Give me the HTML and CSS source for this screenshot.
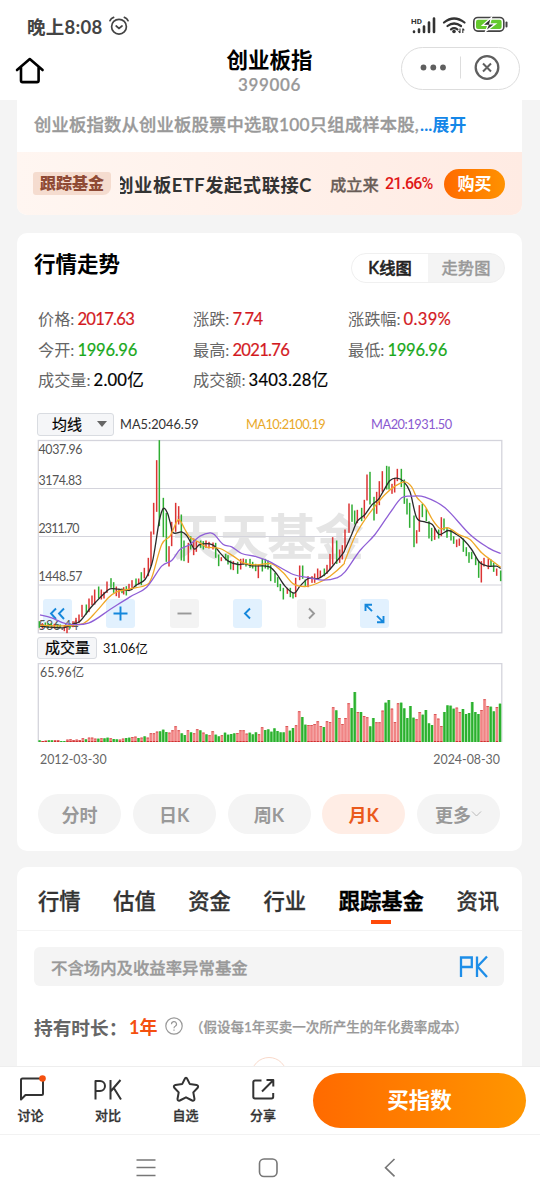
FILE: index.html
```
<!DOCTYPE html>
<html lang="zh-CN">
<head>
<meta charset="utf-8">
<title>创业板指</title>
<link rel="stylesheet" href="styles.css">
</head>
<body>
<div class="phone">
  <header class="header">
    <div class="status">
      <span class="clock">晚上8:08</span>
      <svg class="alarm" width="20" height="20" viewBox="0 0 20 20" fill="none" stroke="#444" stroke-width="1.7" stroke-linecap="round"><circle cx="10" cy="10.7" r="7.4"/><path d="M7.2 10l2.8 2.4 3-2.4M1 4.6Q2 2.2 4.6 1.4M19 4.6Q18 2.2 15.4 1.4"/></svg>
      <svg class="signals" width="98" height="20" viewBox="0 0 98 20">
        <text x="0" y="7.500" class="hd">HD</text>
        <path d="M3 15.500v.5M8 13.500v2.500M13 10.500v5.500M18 6.500v9.500M23 2.500v13.500" stroke="#333" stroke-width="2.600" stroke-linecap="round"/>
        <path d="M33 6.500q10-8 20.500 0M36.500 10q6.500-5 13.500 0M40 13.300q3-2.200 6.400 0" fill="none" stroke="#333" stroke-width="2.200" stroke-linecap="round"/><circle cx="43" cy="15.500" r="1.800" fill="#333"/><path d="M49 12.500v4.500M47.500 15.200l1.500 1.800M51.800 17v-4.500M53.300 14.300l-1.500-1.800" stroke="#333" stroke-width="1.100"/>
        <rect x="62.800" y="1.500" width="30" height="13.600" rx="4" fill="#fff" stroke="#444" stroke-width="1.600"/><rect x="65" y="3.700" width="25.600" height="9.200" rx="2" fill="#64c92d"/><path d="M95.500 6.500v4" stroke="#444" stroke-width="2" stroke-linecap="round"/><path d="M80.500 1.500L71.500 9.300h5.500L74.500 15.500l10-7.700h-5.700z" fill="#333" stroke="#fff" stroke-width="1.300"/>
      </svg>
    </div>
    <div class="titlebar">
      <svg class="home" width="30" height="28" viewBox="0 0 30 28" fill="none" stroke="#000" stroke-width="2.600" stroke-linecap="round" stroke-linejoin="round"><path d="M2 14L14.800 3 27.600 14M6 11.500v13a1.600 1.600 0 0 0 1.600 1.600h14.400a1.600 1.600 0 0 0 1.600-1.600v-13"/></svg>
      <div class="title"><h1>创业板指</h1><p>399006</p></div>
      <div class="capsule">
        <svg width="118" height="41" viewBox="0 0 118 41" fill="#5f5f5f"><circle cx="21.500" cy="19.500" r="2.900"/><circle cx="31.300" cy="19.500" r="2.900"/><circle cx="41" cy="19.500" r="2.900"/><path d="M58.500 8.500v22" stroke="#ddd"/><circle cx="85" cy="19.500" r="11.300" fill="none" stroke="#5f5f5f" stroke-width="2.300"/><path d="M81 15.500l8 8m0-8l-8 8" stroke="#5f5f5f" stroke-width="2"/></svg>
      </div>
    </div>
  </header>

  <main class="content">
    <section class="card intro">
      <p class="desc">创业板指数从创业板股票中选取100只组成样本股,<b>...展开</b></p>
      <div class="promo">
        <span class="badge">跟踪基金</span>
        <span class="fund"><span>创业板ETF发起式联接C</span></span>
        <span class="since">成立来</span><span class="rate">21.66%</span>
        <span class="buy">购买</span>
      </div>
    </section>

    <section class="card market">
      <div class="market-head">
        <h2>行情走势</h2>
        <div class="switch"><span class="on">K线图</span><span>走势图</span></div>
      </div>
      <div class="stats">
        <div>价格:<b class="up">2017.63</b></div><div>涨跌:<b class="up">7.74</b></div><div>涨跌幅:<b class="up percent">0.39%</b></div>
        <div>今开:<b class="down">1996.96</b></div><div>最高:<b class="up">2021.76</b></div><div>最低:<b class="down">1996.96</b></div>
        <div>成交量:<b>2.00亿</b></div><div>成交额:<b>3403.28亿</b></div>
      </div>
      <div class="averages">
        <span class="select">均线<i></i></span>
        <span class="ma5">MA5:2046.59</span><span class="ma10">MA10:2100.19</span><span class="ma20">MA20:1931.50</span>
      </div>
      <div class="kchart">
        <svg width="466" height="195" viewBox="37 439.500 466 195">
          <text x="172" y="555" class="watermark" textLength="192">天天基金</text>
          <path d="M38 489H502M38 537H502M38 585.500H502" stroke="#d4d4dc" stroke-width="1.200"/>
          <rect x="38.300" y="441" width="463.500" height="192.300" fill="none" stroke="#d4d4dc" stroke-width="1.300"/>
        </svg>
        <div class="tools">
          <span class="tool"><svg viewBox="0 0 29 29"><path d="M13 9.500L8 14.500l5 5.500M21 9.500L16 14.500l5 5.500"/></svg></span>
          <span class="tool"><svg viewBox="0 0 29 29"><path d="M14.500 7.500v14M7.500 14.500h14"/></svg></span>
          <span class="tool off"><svg viewBox="0 0 29 29"><path d="M7.500 14.500h14"/></svg></span>
          <span class="tool"><svg viewBox="0 0 29 29"><path d="M17 9.500l-5 5 5 5"/></svg></span>
          <span class="tool off"><svg viewBox="0 0 29 29"><path d="M12 9.500l5 5-5 5"/></svg></span>
          <span class="tool"><svg viewBox="0 0 29 29"><path d="M5.500 12V5.700H12M6 6.200l6 6M17 23.300h6.500V17M23 22.800l-6-6"/></svg></span>
        </div>
        <svg class="plot" id="plot" width="466" height="195" viewBox="37 439.500 466 195"><g class="axis"><text x="38.500" y="454.300" textLength="44">4037.96</text><text x="38.500" y="485.300" textLength="43.500">3174.83</text><text x="38.500" y="533.800" textLength="41">2311.70</text><text x="38.500" y="581.800" textLength="44">1448.57</text><text x="38.500" y="630" textLength="40">586.44</text></g></svg>
      </div>
      <div class="volume-head"><span class="select small">成交量</span><span>31.06亿</span></div>
      <svg class="volume" id="volume" width="466" height="80" viewBox="37 663 466 80"><path d="M38.300 742V663.700H501.800V742" fill="none" stroke="#d4d4dc" stroke-width="1.300"/><text x="40" y="677" class="axis">65.96亿</text></svg>
      <div class="dates"><span>2012-03-30</span><span>2024-08-30</span></div>
      <div class="periods"><span>分时</span><span>日K</span><span>周K</span><span class="on">月K</span><span>更多<svg width="11" height="8" viewBox="0 0 11 8" fill="none" stroke="#bbb"><path d="M1 1.500l4.500 4.500L10 1.500"/></svg></span></div>
    </section>

    <section class="card funds">
      <nav class="tabs"><span>行情</span><span>估值</span><span>资金</span><span>行业</span><span class="on">跟踪基金</span><span>资讯</span></nav>
      <div class="notice"><span>不含场内及收益率异常基金</span>
        <svg width="30" height="24" viewBox="0 0 30 24" fill="none" stroke="#1e8ee8" stroke-width="2.300"><path d="M2 22V2.500H12.800V12H2M18 1.500V22M28 1.500L18.500 11.500 28 22"/></svg>
      </div>
      <div class="hold"><b>持有时长：</b><strong>1年</strong>
        <svg width="18" height="18" viewBox="0 0 18 18" fill="none" stroke="#999" stroke-width="1.200"><circle cx="9" cy="9" r="8.200"/><path d="M6.500 7.200a2.500 2.500 0 1 1 3.700 2.100q-1.200.6-1.200 1.900M9 12.500v1.300"/></svg>
        <span>（假设每1年买卖一次所产生的年化费率成本）</span>
      </div>
      <div class="ring"></div>
    </section>
  </main>

  <footer class="actions">
    <div class="action"><svg width="30" height="28" viewBox="0 0 30 28"><path d="M5 24.500V5a1.500 1.500 0 0 1 1.500-1.500h19a1.500 1.500 0 0 1 1.500 1.500v13.500a1.500 1.500 0 0 1-1.500 1.500H9.500z"/><circle cx="26.500" cy="3.500" r="3.300" class="dot"/></svg><span>讨论</span></div>
    <div class="action"><svg width="30" height="28" viewBox="0 0 30 28"><path d="M2.500 24.500V6H7a4.800 4.800 0 0 1 0 10H2.500M17.500 5v19.500M27.500 5L18 16M20.800 13L28 24.500"/></svg><span>对比</span></div>
    <div class="action"><svg width="30" height="28" viewBox="0 0 30 28"><path d="M15 2.800Q15.800 2.800 16.300 4L18.700 8.900 25.600 10Q28 10.700 26.700 12.700L22.300 17.400 23.500 24Q23.300 26.300 21.200 25.500L15 22.300 8.800 25.500Q6.700 26.300 6.500 24L7.700 17.400 3.300 12.700Q2 10.700 4.400 10L11.300 8.900 13.700 4Q14.200 2.800 15 2.800z"/></svg><span>自选</span></div>
    <div class="action"><svg width="30" height="28" viewBox="0 0 30 28"><path d="M13.500 5.500H7a1.700 1.700 0 0 0-1.700 1.700v14.600A1.700 1.700 0 0 0 7 23.500h16.500a1.700 1.700 0 0 0 1.700-1.700V18M14 16.500L25.200 5.300M18.500 5h6.800v6.500"/></svg><span>分享</span></div>
    <div class="buy-index">买指数</div>
  </footer>
  <div class="sysnav">
    <svg width="20" height="20" viewBox="0 0 20 20"><path d="M.5 2h19M.5 9.500h19M.5 17.500h19"/></svg>
    <svg width="20" height="20" viewBox="0 0 20 20"><rect x="1.500" y="1" width="17.500" height="17.500" rx="4.500"/></svg>
    <svg width="20" height="20" viewBox="0 0 20 20"><path d="M14.500 1L5.500 9.700l9 8.700"/></svg>
  </div>
</div>
<script src="chart.js"></script>
</body>
</html>
```
FILE: styles.css
```
* { box-sizing: border-box; }
body, h1, h2, p { margin: 0; }
body { width: 540px; height: 1200px; overflow: hidden; background: #f4f4f4; font-family: Lato, "Noto Sans CJK SC", sans-serif; color: #333; }
svg { display: block; flex: none; }
span { white-space: nowrap; flex: none; }
.phone { width: 540px; height: 1200px; display: flex; flex-direction: column; overflow: hidden; }

.header { height: 100px; flex: none; background: #fff; }
.status { height: 40px; padding: 11px 31px 0 27px; display: flex; align-items: center; }
.clock { width: 79px; font-size: 18.500px; font-weight: 700; color: #444; letter-spacing: .25px; }
.alarm { margin-left: 3px; }
.signals { margin-left: auto; }
.hd { font: 700 8px Roboto, sans-serif; fill: #333; }
.titlebar { height: 60px; display: grid; grid-template-columns: 120px 1fr 120px; padding: 0 20px 0 15px; }
.home { margin-top: 16px; }
.title { text-align: center; padding-left: 4px; }
.title h1 { font-size: 21.500px; line-height: 30px; height: 35px; padding-top: 5px; color: #000; font-weight: 700; }
.title p { font-size: 17px; line-height: 20px; font-weight: 600; color: #999; letter-spacing: .6px; -webkit-text-stroke: .2px; }
.capsule { width: 119px; height: 43px; margin: 7px 0 0 1px; border: 1px solid #ddd; border-radius: 22px; }

.content { height: 966px; flex: none; overflow: hidden; display: flex; flex-direction: column; }
.card { margin: 0 18px 0 17px; background: #fff; border-radius: 10px; flex: none; }
.intro { height: 115px; border-radius: 0 0 10px 10px; overflow: hidden; }
.desc { height: 52px; padding-left: 17px; line-height: 50px; font-size: 17.300px; font-weight: 500; color: #999; letter-spacing: .22px; white-space: nowrap; -webkit-text-stroke: .35px; }
.desc b { color: #1487e8; font-weight: 700; font-size: 16.800px; -webkit-text-stroke: 0; margin-left: 1px; }
.promo { height: 63px; background: linear-gradient(90deg, #fff6f1, #ffebe3); display: flex; align-items: center; padding-left: 16px; }
.badge { width: 78px; height: 23px; border-radius: 3px 3px 8px 3px; background: #f5dccf; color: #8f4a35; font-size: 16px; line-height: 22px; font-weight: 900; text-align: center; }
.fund { width: 192px; margin-left: 9px; overflow: hidden; display: flex; justify-content: flex-end; font-size: 18.300px; font-weight: 700; letter-spacing: .55px; }
.since { width: 49px; margin-left: 18px; font-size: 16.300px; color: #695d57; font-weight: 500; -webkit-text-stroke: .3px; }
.rate { width: 49px; margin-left: 6px; font: 500 16px Roboto, sans-serif; color: #e01717; letter-spacing: -.85px; }
.buy { width: 61px; height: 30px; margin-left: 10px; border-radius: 15px; background: linear-gradient(90deg, #ff6a00, #ff9200); color: #fff; text-align: center; line-height: 29px; font-size: 17px; font-weight: 700; }

.market { height: 618px; margin-top: 18px; padding-top: 20px; }
.market-head { height: 30px; display: flex; justify-content: space-between; padding: 0 17px; }
.market h2 { font-size: 21.500px; line-height: 22px; font-weight: 700; color: #000; }
.switch { width: 154px; height: 30px; border-radius: 15px; background: #f4f4f4; border: 1px solid #f0f0f0; display: flex; overflow: hidden; font-size: 16.300px; font-weight: 500; line-height: 28px; color: #999; -webkit-text-stroke: .3px; }
.switch span { flex: 1; text-align: center; }
.switch .on { background: #fff; color: #222; border-radius: 14px 0 0 14px; -webkit-text-stroke: .5px; }
.stats { margin: 20px 0 0 21px; display: grid; grid-template-columns: 155px 155px 155px; grid-auto-rows: 30.500px; font-size: 16.200px; line-height: 31px; color: #666; white-space: nowrap; }
.stats b { margin-left: 3px; font-weight: 400; color: #000; letter-spacing: .2px; font-size: 16.600px; -webkit-text-stroke: .2px; }
.stats .up { color: #d3191e; letter-spacing: -.7px; }
.stats .percent { letter-spacing: .3px; }
.stats .down { color: #19a81b; letter-spacing: -.3px; }
.averages { margin: 18px 0 0 20px; height: 23px; display: grid; grid-template-columns: 83px 125px 126px 1fr; align-items: center; font-size: 12.800px; line-height: 20px; }
.select { width: 77px; height: 23px; border: 1px solid #d9dce1; border-radius: 3px; background: #f5f6f8; font-size: 15px; line-height: 21px; color: #000; padding-left: 14px; display: flex; align-items: center; -webkit-text-stroke: .2px; }
.select i { margin-left: 15px; border: 5px solid transparent; border-top: 6px solid #666; border-bottom: 0; }
.ma5 { color: #333; }
.ma10 { color: #e9a92a; letter-spacing: -.58px; padding-left: 1px; }
.ma20 { color: #8a5ad0; letter-spacing: -.45px; }
.kchart { margin: 3.500px 0 0 20px; height: 195px; position: relative; }
.watermark { font: 700 49px "Noto Sans CJK SC", sans-serif; fill: #e5e5e5; }
.axis { font-size: 12.400px; fill: #555; }
.tools { position: absolute; left: 6px; top: 159.500px; display: flex; gap: 34.400px; }
.tool { width: 29px; height: 29px; border-radius: 3px; background: #e2f1fe; }
.tool svg { width: 29px; height: 29px; fill: none; stroke: #1487dc; stroke-width: 1.900; }
.tool.off { background: #f3f3f3; }
.tool.off svg { stroke: #999; }
.plot { position: absolute; left: 0; top: 0; }
.volume-head { margin: 2.500px 0 0 20px; height: 22px; display: flex; align-items: center; gap: 6px; font-size: 12.600px; color: #111; }
.select.small { width: 60px; height: 22px; padding-left: 7px; }
.volume { margin: 4px 0 0 20px; }
.dates { margin: 8px 22px 0 23px; height: 18px; display: flex; justify-content: space-between; font-size: 12.400px; line-height: 18px; color: #666; }
.periods { margin: 25px 22px 0 21px; display: flex; justify-content: space-between; }
.periods span { width: 83px; height: 40px; border-radius: 20px; background: #f4f4f4; display: flex; align-items: center; justify-content: center; font-size: 18px; font-weight: 700; color: #999; }
.periods .on { background: #ffede5; color: #ea5a1c; }

.funds { height: 250px; margin-top: 16px; border-radius: 10px 10px 0 0; overflow: hidden; }
.tabs { height: 64px; padding: 0 23px 0 21px; display: flex; justify-content: space-between; border-bottom: 1px solid #f4f4f4; font-size: 21.300px; line-height: 68px; font-weight: 500; -webkit-text-stroke: .3px; }
.tabs .on { color: #000; font-weight: 700; background: linear-gradient(#ff4a0a, #ff4a0a) center 53px / 20px 4px no-repeat; }
.notice { margin: 16px 18px 0 17px; height: 39px; border-radius: 6px; background: #f4f4f4; display: flex; align-items: center; justify-content: space-between; padding: 0 15px 0 17px; font-size: 16.400px; font-weight: 500; color: #999; -webkit-text-stroke: .35px; }
.hold { margin: 25px 0 0 17px; height: 30px; display: flex; align-items: center; color: #666; font-size: 18.700px; }
.hold b { width: 95px; font-weight: 700; }
.hold strong { width: 36px; color: #f4500f; font-size: 18px; }
.hold span { margin-left: 7px; font-size: 13.500px; color: #999; font-weight: 500; -webkit-text-stroke: .25px; }
.ring { width: 36px; height: 36px; border: 1px solid #f9d9ca; border-radius: 50%; margin: 16px auto 0 234px; }

.actions { height: 69px; flex: none; background: #fff; border-top: 1px solid #eee; border-bottom: 1px solid #f2f2f2; display: grid; grid-template-columns: 77.500px 77.500px 77.500px 65px 213px; padding-left: 15.500px; }
.action { padding-top: 8px; }
.action svg { fill: none; stroke: #333; stroke-width: 2; stroke-linejoin: round; overflow: visible; }
.action .dot { fill: #f4500f; stroke: none; }
.action span { display: block; width: 30px; margin-top: 2px; text-align: center; font-size: 13px; line-height: 20px; font-weight: 500; -webkit-text-stroke: .3px; }
.buy-index { width: 213px; height: 55px; margin-top: 5.500px; border-radius: 28px; background: linear-gradient(90deg, #ff6a00, #ff9600); color: #fff; text-align: center; font-size: 21.500px; line-height: 54px; font-weight: 700; }
.sysnav { height: 65px; background: #fff; display: flex; gap: 102px; padding: 23px 0 0 135.500px; }
.sysnav svg { fill: none; stroke: #777; stroke-width: 1.600; }
```
FILE: chart.js
```
const NS = 'http://www.w3.org/2000/svg';
const RED = '#dc3434', GREEN = '#2fae33';

// Each panel holds candles as "x low high direction" in thirds of a pixel from its left edge.
const panels = [
  { left: 30,
    candles: '28 560 580 g,37 566 582 r,46 564 578 g,55 566 580 g,64 566 578 g,73 568 582 r,82 570 582 g,91 570 580 g,103 572 590 r,111 575 596 r,120 566 582 g,129 560 578 r,138 550 572 r,147 540 566 r,156 511 548 r,169 510 540 g,177 492 533 r,186 483 512 r,194 465 510 r,206 456 492 g,214 465 495 r,222 472 492 r,231 441 475 r,243 431 460 g,251 443 475 g,259 456 485 r,267 463 490 r,276 462 476 g,281 458 480 r,289 455 483 g,297 448 470 r,306 437 460 r,318 432 456 g,326 432 450 r,334 413 452 g,343 400 432 r,355 370 425 r,363 291 395 r,371 205 300 r,380 77 232 r,388 17 275 g,400 190 308 g,409 235 382 g,417 335 396 r,425 262 335 r,437 205 292 r,446 215 270 r,454 240 378 g,462 318 380 g,475 325 385 r',
    ma5: '30,575 60,578 100,580 125,570 150,560 180,522 200,500 225,475 240,463 265,464 300,467 318,452 345,435 365,390 375,340 388,258 400,222 412,235 420,262 430,295 455,292 470,303',
    ma10: '30,572 100,574 160,567 200,530 235,490 260,472 300,463 345,453 365,430 395,330 420,305 440,262 450,258 465,285',
    ma20: '30,541 65,550 110,568 175,566 240,525 300,487 350,458 395,395 425,378 450,345' },
  { left: 190,
    candles: '2 305 345 g,11 312 362 r,19 320 352 r,32 318 340 g,40 320 345 g,48 318 340 r,57 322 342 r,69 324 345 r,77 325 370 g,86 360 395 g,94 368 380 r,107 358 378 g,114 362 390 g,122 378 405 g,130 380 407 r,143 382 418 g,152 373 405 r,160 372 390 r,168 374 396 g,180 373 400 g,188 382 402 g,197 388 410 g,205 390 431 r,217 373 411 g,226 373 402 g,234 378 405 g,242 392 440 g,255 415 445 g,263 428 458 g,271 448 470 g,280 460 495 g,292 460 478 r,301 460 488 g,309 475 492 g,317 430 488 r,329 393 437 r,338 393 433 g,346 435 455 g,354 425 458 r,366 425 445 r,374 417 445 r,383 402 435 r,391 408 430 r,403 402 425 g,411 391 418 r,420 358 405 r,428 308 390 r,440 318 388 g,449 345 385 r,457 332 375 r,465 285 345 r,477 207 295 r',
    ma5: '0,320 14,344 30,330 68,331 90,355 115,380 145,390 165,388 185,394 215,394 240,398 260,418 285,455 312,476 330,455 355,432 385,432 410,415 440,380 460,355',
    ma10: '0,308 30,325 50,338 90,342 130,365 160,385 200,391 245,388 280,415 310,448 345,456 380,447 420,425 460,390',
    ma20: '0,330 30,305 60,295 75,302 100,330 125,337 155,357 200,367 240,382 310,420 360,430 400,437 440,430' },
  { left: 345,
    candles: '21 210 262 g,29 228 270 g,37 226 266 r,50 220 260 g,58 196 252 r,66 120 198 r,75 112 210 g,87 187 258 g,95 172 238 r,103 140 212 r,112 110 172 r,125 94 165 g,132 96 165 g,141 148 178 r,149 130 174 r,157 103 140 r,169 103 158 g,178 135 208 g,186 192 240 g,194 205 280 g,207 243 338 g,215 287 327 r,223 212 292 r,232 208 248 g,244 222 260 g,252 260 312 g,260 280 320 g,269 280 316 r,281 285 312 g,289 248 305 r,297 252 288 g,306 280 310 g,318 285 318 g,326 305 328 g,335 315 338 r,343 312 334 r,355 312 352 g,364 338 365 g,372 353 385 g,380 352 374 g,392 368 392 g,401 380 430 g,409 380 444 r,417 370 396 r,430 372 404 r,438 375 396 g,446 385 412 g,455 402 424 r,467 408 440 g',
    ma5: '0,345 20,300 37,260 60,240 80,212 100,195 115,170 135,138 155,131 175,140 195,172 215,250 240,262 262,270 283,300 310,288 335,300 355,315 380,345 405,385 430,395 455,395 467,402',
    ma10: '0,378 30,305 60,255 90,215 120,180 150,155 180,142 200,157 215,188 240,215 262,255 285,282 310,280 345,302 375,315 410,355 440,378 467,398',
    ma20: '0,412 45,348 90,300 135,235 170,190 200,185 240,188 300,220 375,300 430,340 467,357' }
];

const volumes = 'g5 r3 r4 g5 g5 r5 r5 g3 g3 r7 r8 r6 r7 r6 r11 g8 r13 r13 r10 g10 r11 g11 g13 r11 g9 g8 r7 r10 g12 g13 r15 r16 g12 r13 g17 r13 r26 r26 r31 g32 g37 g30 r28 r35 r47 r35 g26 g21 r35 g29 r26 r38 g35 r28 g23 r20 r32 g22 g17 r20 g28 g22 g24 g26 r27 r35 r35 r25 g28 g23 g29 r23 r44 g36 g38 g31 g41 g33 g29 g29 r48 g34 g42 r50 r92 g75 g52 r51 r51 r54 r62 r48 g45 r62 r60 r104 g95 r72 r54 r72 r116 g102 g150 r90 g90 r78 r74 g47 g72 r59 r59 r94 g118 g126 r100 r60 r116 g118 g101 g72 g108 g73 r68 r90 g82 g96 g56 g51 r84 r70 r48 g90 g110 g109 g100 r103 r90 g99 g84 g87 g120 g90 g84 r96 r128 r108 g106 g92 r105 g115'.split(' ');

function add(parent, tag, attrs) {
  const el = document.createElementNS(NS, tag);
  for (const key in attrs) el.setAttribute(key, attrs[key]);
  parent.appendChild(el);
}

function smooth(points) {
  let d = 'M' + points[0];
  for (let i = 0; i < points.length - 1; i++) {
    const a = points[i - 1] || points[i], b = points[i], c = points[i + 1], e = points[i + 2] || c;
    d += `C${b[0] + (c[0] - a[0]) / 6} ${b[1] + (c[1] - a[1]) / 6} ${c[0] - (e[0] - b[0]) / 6} ${c[1] - (e[1] - b[1]) / 6} ${c[0]} ${c[1]}`;
  }
  return d;
}

const plot = document.getElementById('plot');
for (const panel of panels) {
  for (const row of panel.candles.split(',')) {
    const [x, top, bottom, dir] = row.split(' ');
    add(plot, 'rect', { x: panel.left + x / 3 - 0.75, y: 435 + top / 3, width: 1.5, height: (bottom - top) / 3, fill: dir === 'r' ? RED : GREEN });
  }
}
for (const [key, color] of [['ma5', '#2a2a2a'], ['ma10', '#f0a828'], ['ma20', '#8f5fd6']]) {
  const points = panels.flatMap(panel => panel[key].split(' ').map(pair => {
    const [x, y] = pair.split(',').map(Number);
    return [panel.left + x / 3, 435 + y / 3];
  }));
  add(plot, 'path', { d: smooth(points), fill: 'none', stroke: color, 'stroke-width': 1.3 });
}

const volume = document.getElementById('volume');
volumes.forEach((item, i) => {
  const height = item.slice(1) / 3, red = item[0] === 'r';
  const x = 38.1 + i * 3.09;
  add(volume, 'rect', { x, y: 742 - height, width: 3.09, height, fill: red ? '#f5aaaa' : '#8fdc90' });
  add(volume, 'rect', { x: x + 0.5, y: 742 - height, width: 2, height, fill: red ? '#f08484' : '#2bb02e' });
  if (red) {
    add(volume, 'rect', { x: x + 0.4, y: 742 - height, width: 2.3, height: 0.8, fill: '#d44c4c' });
    add(volume, 'rect', { x: x + 0.4, y: 741, width: 2.3, height: 1, fill: '#d03030' });
  }
});
```
